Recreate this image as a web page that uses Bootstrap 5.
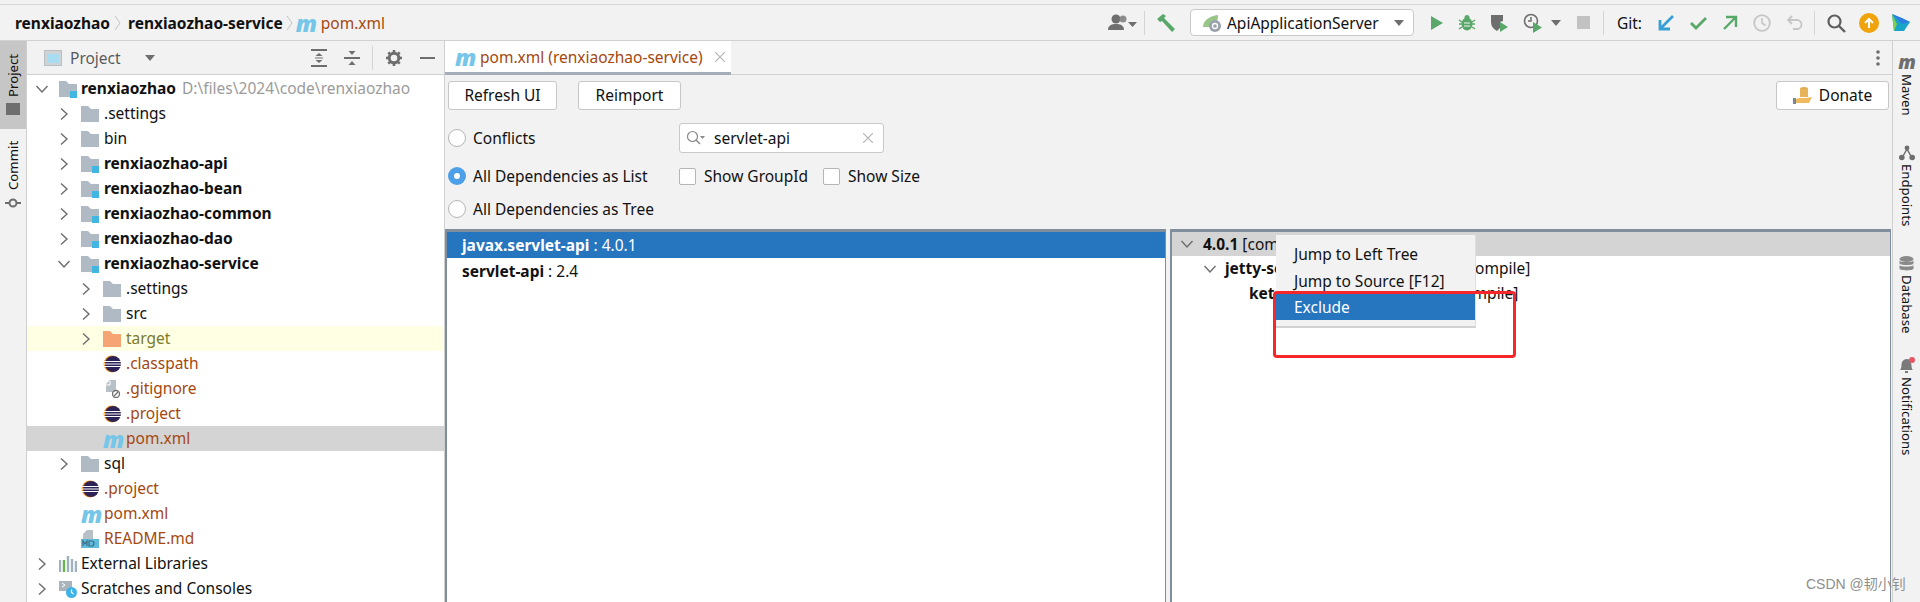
<!DOCTYPE html>
<html lang="en"><head><meta charset="utf-8"><title>pom.xml</title>
<link rel="stylesheet" href="https://cdn.jsdelivr.net/npm/bootstrap@5.3.0/dist/css/bootstrap.min.css">
<style>
html,body{height:602px;overflow:hidden}
body{background:#f2f2f2;font:15.5px/20px "Noto Sans","Noto Sans CJK SC",sans-serif;color:#111;position:relative}
.top-bar{height:37px;margin-top:4px;border-top:1px solid #d6d6d6;border-bottom:1px solid #d1d1d1;padding-left:15px;flex:none}
.crumb-sep{width:7px;height:16px;margin:0 7px 0 4px;flex:none}
.crumb-sep.tight{margin:0 3px 0 3px}
.mvn{font:italic 800 23px/18px "Open Sans",sans-serif;color:#75c6e8;width:18px;display:inline-block;letter-spacing:-1px;flex:none}
.crumb-file{margin-left:7px}
.file-red{color:#a4480f}
.tools{margin-left:auto;padding-right:10px}
.tools svg{flex:none}
.mg-7{margin-left:7px}.mg-8{margin-left:8px}.mg-10{margin-left:10px}.mg-11{margin-left:11px}.mg-12{margin-left:12px}.mg-13{margin-left:13px}.mg-14{margin-left:14px}.mg-15{margin-left:15px}.mg-16{margin-left:16px}.mg-17{margin-left:17px}.mg-18{margin-left:18px}
.vsep{width:1px;height:24px;background:#d4d4d4;flex:none}
.run-box{width:224px;height:27px;background:#fff;border:1px solid #c9c9c9;border-radius:4px;padding:0 9px 0 11px;gap:5px}
.run-box .caret-mark{margin-left:auto}
.main-area{height:561px}
.side-left{width:27px;border-right:1px solid #cfcfcf;flex:none}
.side-right{width:28px;border-left:1px solid #cfcfcf;flex:none;padding-top:3px}
.side-tab{writing-mode:vertical-rl;font-size:13.2px;line-height:18px;gap:5px;display:flex;align-items:center;width:26px}
.side-right .side-tab{gap:3px}
.side-left .side-tab{transform:rotate(180deg)}
.proj-on{background:#c6c6c6;height:88px;justify-content:center}
.commit-tab{height:72px;margin-top:10px;justify-content:flex-start}
.mvn-side{color:#6e6e6e;font-size:19px;writing-mode:horizontal-tb;text-align:center}
.mt-a{margin-top:9px}.mt-b{margin-top:29px}.mt-c{margin-top:30px}.mt-d{margin-top:24px}
.proj-panel{width:418px;flex:none;background:#fff;border-right:1px solid #cfcfcf}
.proj-head{height:34px;background:#f2f2f2;border-bottom:1px solid #d1d1d1;padding-left:17px;padding-right:9px}
.tree-body{padding-top:1px}
.row-line{height:25px;white-space:nowrap;display:flex;align-items:center;padding-left:8px;line-height:25px}
.row-line.l1{padding-left:30px}
.row-line.l2{padding-left:52px}
.row-line.hl-y{background:#ffffe4}
.row-line.hl-g{background:#d4d4d4}
.arrow-box{width:14px;height:14px;margin-right:10px;flex:none}
.ico{width:18px;height:18px;margin-right:4px;flex:none}
.l1 .ico,.l2 .ico{margin-right:5px}
.no-arrow{margin-left:24px}
.mvn-gap{margin-right:5px}
.strong-t{font-weight:700}
.path-t{color:#9b9b9b;margin-left:6px}
.olive{color:#7d7a2a}
.editor{min-width:0}
.tab-strip{height:34px;border-bottom:1px solid #d1d1d1;padding-right:12px}
.tab-on{width:286px;height:34px;background:#fff;border-bottom:3px solid #a5adb8;padding-left:10px;gap:3px}
.pom-tab-close{margin-left:9px}
.tool-row{padding:6px 3px 0 3px;height:39px}
.ij-btn{background:#fff;border:1px solid #c7c7c7;border-radius:3px;height:29px;padding:0;line-height:27px;color:#111;text-align:center}
.btn-w1{width:109px}.btn-w2{width:103px;margin-left:21px}.btn-w3{width:113px;gap:6px}
.opt-area{height:115px;padding-top:9px}
.opt-col{width:234px;padding-left:3px;flex:none}
.opt-row{height:30px;gap:7px}
.opt-row.second{margin-top:8px}
.opt-row.third{margin-top:3px}
.radio-o{width:18px;height:18px;border-radius:50%;border:1px solid #b5b5b5;background:#fff;flex:none}
.radio-on{background:#4d9fe8;border:none;position:relative}
.radio-on::after{content:"";position:absolute;left:6px;top:6px;width:6px;height:6px;background:#fff;border-radius:50%}
.search-bx{width:205px;height:30px;background:#fff;border:1px solid #c9c9c9;border-radius:3px;padding:0 10px 0 6px}
.chk-b{width:17px;height:17px;border:1px solid #b5b5b5;border-radius:2px;background:#fff;flex:none;margin-right:1px}
.grp-lab{width:112px}
.dep-panes{gap:4px;padding-right:1px;height:373px}
.dep-pane{background:#fff;border-top:3px solid #7f8d9d;border-left:2px solid #7f8d9d;border-right:1px solid #7f8d9d;min-width:0}
.left-pane{width:721px;flex:none}
.dep-row{height:26px;padding-left:15px;line-height:26px;white-space:nowrap}
.dep-row.sel{background:#2675bf;color:#fff}
.dep-row.two{height:27px;line-height:27px}
.r-row{height:25px;line-height:25px;white-space:nowrap;display:flex;align-items:center}
.r-row.head{background:#d4d4d4;height:24px}
.lvl-a{padding-left:8px}.lvl-b{padding-left:31px}.lvl-c{padding-left:77px}
.arrow-a{margin-right:9px}.arrow-b{margin-right:8px}
.float-menu{position:absolute;left:1276px;top:235px;width:200px;height:93px;background:#f2f2f2;border-bottom:2px solid #d2d2d2;border-right:1px solid #dedede;padding-top:6px;z-index:2}
.menu-row{height:26px;line-height:26px;padding-left:18px}
.menu-row.two{margin-top:1px}
.menu-row.act{background:#2675bf;color:#fff}
.red-frame{position:absolute;left:1273px;top:291px;width:243px;height:67px;border:3px solid #f6262a;border-radius:4px;z-index:3;pointer-events:none}
.wm{position:absolute;left:1806px;top:575px;color:#8e8e8e;font:14px/18px "Liberation Sans","Noto Sans CJK SC",sans-serif;z-index:4;white-space:nowrap}
</style></head>
<body>
<svg width="0" height="0" class="position-absolute">
<defs>
<symbol id="fold" viewBox="0 0 18 18"><path d="M0 1h7l3 3h8v13H0z" fill="#afbac4"/></symbol>
<symbol id="fold-o" viewBox="0 0 18 18"><path d="M0 1h7l3 3h8v13H0z" fill="#f7a474"/></symbol>
<symbol id="modf" viewBox="0 0 18 18"><path d="M0 1h7l3 3h8v9h-5v4H0z" fill="#afbac4"/><rect x="11" y="11" width="7" height="7" fill="#40b6e0"/></symbol>
<symbol id="ecl" viewBox="0 0 18 18"><circle cx="9" cy="9" r="8.4" fill="#f7941e"/><circle cx="10" cy="9" r="8" fill="#2c2255"/><path d="M1 6.500h17M1 9h17M1 11.500h17" stroke="#fff" stroke-width="1"/></symbol>
<symbol id="chev-r" viewBox="0 0 14 14"><path d="M4 1.500 10 7l-6 5.500" fill="none" stroke="#6e6e6e" stroke-width="1.400"/></symbol>
<symbol id="chev-d" viewBox="0 0 14 14"><path d="M1.500 4 7 10l5.500-6" fill="none" stroke="#6e6e6e" stroke-width="1.400"/></symbol>
<symbol id="tri" viewBox="0 0 10 6"><path d="M0 0h10L5 6z" fill="#6e6e6e"/></symbol>
</defs></svg>

<div class="top-bar d-flex align-items-center">
<span class="strong-t">renxiaozhao</span>
<svg class="crumb-sep" viewBox="0 0 7 16"><path d="M1 1l5 7-5 7" fill="none" stroke="#c4c4c4"/></svg>
<span class="strong-t">renxiaozhao-service</span>
<svg class="crumb-sep tight" viewBox="0 0 7 16"><path d="M1 1l5 7-5 7" fill="none" stroke="#c4c4c4"/></svg>
<span class="mvn">m</span><span class="file-red crumb-file">pom.xml</span>
<div class="tools d-flex align-items-center">
<svg width="30" height="20" viewBox="0 0 30 20"><circle cx="9" cy="6" r="4.500" fill="#6e6e6e"/><path d="M1 17c0-5 4-6 8-6s8 1 8 6z" fill="#6e6e6e"/><circle cx="16" cy="6" r="3.500" fill="#8c8c8c"/><path d="M21 9h9l-4.500 5z" fill="#6e6e6e"/></svg>
<span class="vsep mg-7"></span>
<svg class="mg-11" width="20" height="20" viewBox="0 0 20 20"><path d="M1 6 7 1l3 2-2 2 11 11-3 3L6 8 4 9z" fill="#59a869"/></svg>
<div class="run-box d-flex align-items-center mg-14">
<svg width="20" height="20" viewBox="0 0 20 20"><path d="M1 14C1 7 8 3 16 2c0 7-3 12-8 12z" fill="#97c688"/><circle cx="13" cy="13" r="6" fill="#9aa3ab"/><circle cx="13" cy="13" r="2.500" fill="none" stroke="#fff" stroke-width="1.300"/></svg>
<span>ApiApplicationServer</span>
<svg class="caret-mark" width="10" height="6"><use href="#tri"/></svg>
</div>
<svg class="mg-15" width="16" height="18" viewBox="0 0 16 18"><path d="M2 2l12 7-12 7z" fill="#59a869"/></svg>
<svg class="mg-13" width="18" height="18" viewBox="0 0 18 18"><ellipse cx="9" cy="10" rx="5.500" ry="6.500" fill="#59a869"/><circle cx="9" cy="3.500" r="2.500" fill="#59a869"/><path d="M1 6l3 2M17 6l-3 2M1 10h3M17 10h-3M1 15l3-2M17 15l-3-2" stroke="#59a869" stroke-width="1.500"/><path d="M6 9h6M6 12h6" stroke="#f2f2f2"/></svg>
<svg class="mg-13" width="20" height="20" viewBox="0 0 20 20"><path d="M2 2h12v6l-3 1v6l-3 3c-4-2-6-5-6-9z" fill="#6e6e6e"/><path d="M11 9l8 5-8 5z" fill="#59a869"/></svg>
<svg class="mg-14" width="20" height="20" viewBox="0 0 20 20"><circle cx="8" cy="8" r="6.500" fill="none" stroke="#6e6e6e" stroke-width="1.600"/><path d="M8 4v4H5" fill="none" stroke="#6e6e6e" stroke-width="1.500"/><path d="M10 9l9 5.500-9 5.500z" fill="#59a869"/></svg>
<svg class="mg-8" width="10" height="6"><use href="#tri"/></svg>
<svg class="mg-16" width="13" height="13" viewBox="0 0 13 13"><rect width="13" height="13" fill="#c2c2c2"/></svg>
<span class="vsep mg-13"></span>
<span class="mg-13">Git:</span>
<svg class="mg-15" width="18" height="18" viewBox="0 0 18 18"><path d="M16 2 4 14M3 6v9h10" fill="none" stroke="#389fd6" stroke-width="2.800"/></svg>
<svg class="mg-15" width="18" height="18" viewBox="0 0 18 18"><path d="M1 9l5 5L16 4" fill="none" stroke="#59a869" stroke-width="2.800"/></svg>
<svg class="mg-14" width="16" height="16" viewBox="0 0 16 16"><path d="M2 14 13 3M4 2h10v10" fill="none" stroke="#59a869" stroke-width="2.400"/></svg>
<svg class="mg-14" width="20" height="20" viewBox="0 0 20 20"><circle cx="10" cy="10" r="7.800" fill="none" stroke="#c6c6c6" stroke-width="1.800"/><path d="M10 5v5l3.500 2.500" fill="none" stroke="#c6c6c6" stroke-width="1.600"/></svg>
<svg class="mg-14" width="18" height="18" viewBox="0 0 18 18"><path d="M6 2 2 6l4 4M2 6h9a4.500 4.500 0 0 1 0 9H7" fill="none" stroke="#c6c6c6" stroke-width="1.800"/></svg>
<span class="vsep mg-10"></span>
<svg class="mg-11" width="20" height="20" viewBox="0 0 20 20"><circle cx="8.500" cy="8.500" r="6" fill="none" stroke="#5e5e5e" stroke-width="2.200"/><path d="M13 13l6 6" stroke="#5e5e5e" stroke-width="2.400"/></svg>
<svg class="mg-13" width="20" height="20" viewBox="0 0 20 20"><circle cx="10" cy="10" r="10" fill="#f0a30a"/><path d="M10 15V7M6 10l4-4 4 4" fill="none" stroke="#fff" stroke-width="2"/></svg>
<svg class="mg-13" width="18" height="20" viewBox="0 0 18 20"><path d="M0 1l18 8-6 9H2z" fill="#1aa5c8"/><path d="M0 1l10 4 8 4-8 2z" fill="#2f7de1"/><path d="M0 1l5 10-3 7z" fill="#7ccf4f"/></svg>
</div>
</div>

<div class="main-area d-flex">
<div class="side-left d-flex flex-column">
<div class="side-tab proj-on"><svg width="14" height="14" viewBox="0 0 14 14"><path d="M0 1h14v12H5V3H0zM0 3h5v10H0z" fill="#6e6e6e"/></svg><span>Project</span></div>
<div class="side-tab commit-tab"><svg width="16" height="16" viewBox="0 0 16 16"><circle cx="8" cy="8" r="3.500" fill="none" stroke="#6e6e6e" stroke-width="2"/><path d="M0 8h4M12 8h4" stroke="#6e6e6e" stroke-width="2"/></svg><span>Commit</span></div>
</div>

<div class="proj-panel d-flex flex-column">
<div class="proj-head d-flex align-items-center">
<svg width="18" height="18" viewBox="0 0 18 18"><rect x=".5" y="1.500" width="17" height="15" fill="#cfd3d6" stroke="#b9bec2"/><rect x="3" y="5" width="12" height="9" fill="#a8dcf2"/></svg>
<span class="ms-2 text-body-secondary">Project</span>
<svg width="10" height="6" class="ms-4"><use href="#tri"/></svg>
<div class="d-flex align-items-center ms-auto">
<svg width="16" height="18" viewBox="0 0 16 18"><path d="M0 1h16M0 17h16" stroke="#6e6e6e" stroke-width="2"/><path d="M8 4l3.500 3h-7zM8 14l3.500-3h-7z" fill="#6e6e6e"/><path d="M4 9h8" stroke="#6e6e6e"/></svg>
<svg class="mg-17" width="16" height="18" viewBox="0 0 16 18"><path d="M0 9h16" stroke="#6e6e6e" stroke-width="2"/><path d="M8 6 4.500 2h7zM8 12l3.500 4h-7z" fill="#6e6e6e"/></svg>
<span class="vsep mg-12"></span>
<svg class="mg-13" width="16" height="16" viewBox="0 0 16 16"><circle cx="8" cy="8" r="4.800" fill="none" stroke="#6e6e6e" stroke-width="3"/><path d="M8 0v3M8 13v3M0 8h3M13 8h3M2.300 2.300l2 2M11.700 11.700l2 2M2.300 13.700l2-2M11.700 4.300l2-2" stroke="#6e6e6e" stroke-width="2.600"/></svg>
<svg class="mg-18" width="15" height="4" viewBox="0 0 15 4"><rect width="15" height="2" y="1" fill="#6e6e6e"/></svg>
</div>
</div>
<div class="tree-body">
<div class="row-line"><svg class="arrow-box"><use href="#chev-d"/></svg><svg class="ico"><use href="#modf"/></svg><span class="strong-t">renxiaozhao</span><span class="path-t">D:\files\2024\code\renxiaozhao</span></div>
<div class="row-line l1"><svg class="arrow-box"><use href="#chev-r"/></svg><svg class="ico"><use href="#fold"/></svg><span>.settings</span></div>
<div class="row-line l1"><svg class="arrow-box"><use href="#chev-r"/></svg><svg class="ico"><use href="#fold"/></svg><span>bin</span></div>
<div class="row-line l1"><svg class="arrow-box"><use href="#chev-r"/></svg><svg class="ico"><use href="#modf"/></svg><span class="strong-t">renxiaozhao-api</span></div>
<div class="row-line l1"><svg class="arrow-box"><use href="#chev-r"/></svg><svg class="ico"><use href="#modf"/></svg><span class="strong-t">renxiaozhao-bean</span></div>
<div class="row-line l1"><svg class="arrow-box"><use href="#chev-r"/></svg><svg class="ico"><use href="#modf"/></svg><span class="strong-t">renxiaozhao-common</span></div>
<div class="row-line l1"><svg class="arrow-box"><use href="#chev-r"/></svg><svg class="ico"><use href="#modf"/></svg><span class="strong-t">renxiaozhao-dao</span></div>
<div class="row-line l1"><svg class="arrow-box"><use href="#chev-d"/></svg><svg class="ico"><use href="#modf"/></svg><span class="strong-t">renxiaozhao-service</span></div>
<div class="row-line l2"><svg class="arrow-box"><use href="#chev-r"/></svg><svg class="ico"><use href="#fold"/></svg><span>.settings</span></div>
<div class="row-line l2"><svg class="arrow-box"><use href="#chev-r"/></svg><svg class="ico"><use href="#fold"/></svg><span>src</span></div>
<div class="row-line l2 hl-y"><svg class="arrow-box"><use href="#chev-r"/></svg><svg class="ico"><use href="#fold-o"/></svg><span class="olive">target</span></div>
<div class="row-line l2"><svg class="ico no-arrow"><use href="#ecl"/></svg><span class="file-red">.classpath</span></div>
<div class="row-line l2"><svg class="ico no-arrow" viewBox="0 0 18 18"><path d="M3 4 7 0h6v12H3z" fill="#b8c0c7"/><path d="M7 1v4H3" fill="none" stroke="#fff"/><circle cx="13" cy="14" r="3.500" fill="#fff" stroke="#6e6e6e" stroke-width="1.300"/><path d="M11 16l4-4" stroke="#6e6e6e" stroke-width="1.200"/></svg><span class="file-red">.gitignore</span></div>
<div class="row-line l2"><svg class="ico no-arrow"><use href="#ecl"/></svg><span class="file-red">.project</span></div>
<div class="row-line l2 hl-g"><span class="mvn no-arrow mvn-gap">m</span><span class="file-red">pom.xml</span></div>
<div class="row-line l1"><svg class="arrow-box"><use href="#chev-r"/></svg><svg class="ico"><use href="#fold"/></svg><span>sql</span></div>
<div class="row-line l1"><svg class="ico no-arrow"><use href="#ecl"/></svg><span class="file-red">.project</span></div>
<div class="row-line l1"><span class="mvn no-arrow mvn-gap">m</span><span class="file-red">pom.xml</span></div>
<div class="row-line l1"><svg class="ico no-arrow" viewBox="0 0 18 18"><path d="M6 0h6v9H2V4z" fill="#b8c0c7"/><rect y="9" width="18" height="9" fill="#5fbbdc"/><path d="M2 16v-5l2 3 2-3v5M8 11v5h2.500a2.500 2.500 0 0 0 0-5z" fill="none" stroke="#3a6d84" stroke-width="1.200"/></svg><span class="file-red">README.md</span></div>
<div class="row-line"><svg class="arrow-box"><use href="#chev-r"/></svg><svg class="ico" viewBox="0 0 18 18"><path d="M1 5v12M9 1v16M13 4v13M17 6v11" stroke="#9fb2bd" stroke-width="2.400"/><path d="M5 5v12" stroke="#6ab04c" stroke-width="2.400"/></svg><span>External Libraries</span></div>
<div class="row-line"><svg class="arrow-box"><use href="#chev-r"/></svg><svg class="ico" viewBox="0 0 18 18"><path d="M0 1h13v10H0z" fill="#a9b4bc"/><path d="M3 3l3 2-3 2" stroke="#fff" fill="none"/><circle cx="12.500" cy="12.500" r="5.500" fill="#3db4e7"/><path d="M12.500 9.500v3l2 1.500" stroke="#fff" fill="none" stroke-width="1.200"/></svg><span>Scratches and Consoles</span></div>
</div>
</div>

<div class="editor flex-grow-1 d-flex flex-column">
<div class="tab-strip d-flex align-items-start justify-content-between">
<div class="tab-on d-flex align-items-center"><span class="mvn">m</span><span class="file-red ms-1">pom.xml (renxiaozhao-service)</span><svg class="pom-tab-close" width="10" height="10" viewBox="0 0 10 10"><path d="M0 0l10 10M10 0 0 10" stroke="#b4b4b4" stroke-width="1.200"/></svg></div>
<svg class="align-self-center" width="4" height="16" viewBox="0 0 4 16"><circle cx="2" cy="2" r="1.800" fill="#6e6e6e"/><circle cx="2" cy="8" r="1.800" fill="#6e6e6e"/><circle cx="2" cy="14" r="1.800" fill="#6e6e6e"/></svg>
</div>
<div class="tool-row d-flex">
<button class="ij-btn btn-w1" type="button">Refresh UI</button>
<button class="ij-btn btn-w2" type="button">Reimport</button>
<button class="ij-btn btn-w3 ms-auto d-flex align-items-center justify-content-center" type="button"><svg width="20" height="20" viewBox="0 0 20 20"><ellipse cx="11" cy="3" rx="4" ry="2" fill="#e3a94e"/><rect x="7" y="3" width="8" height="8" fill="#e8b45a"/><path d="M0 13h3l3-1h7l6-1-3 6H3l-3-1z" fill="#f0bb5e"/><rect y="12" width="3" height="6" fill="#7a8794"/></svg>Donate</button>
</div>
<div class="opt-area d-flex">
<div class="opt-col">
<div class="opt-row d-flex align-items-center"><span class="radio-o"></span><span>Conflicts</span></div>
<div class="opt-row second d-flex align-items-center"><span class="radio-o radio-on"></span><span>All Dependencies as List</span></div>
<div class="opt-row third d-flex align-items-center"><span class="radio-o"></span><span>All Dependencies as Tree</span></div>
</div>
<div>
<div class="opt-row d-flex align-items-center"><div class="search-bx d-flex align-items-center"><svg width="20" height="16" viewBox="0 0 20 16"><circle cx="6.500" cy="6.500" r="5" fill="none" stroke="#8a8a8a" stroke-width="1.200"/><path d="M10 10l4 4" stroke="#8a8a8a" stroke-width="1.400"/><path d="M14 6h5l-2.500 3z" fill="#8a8a8a"/></svg><span class="ms-2">servlet-api</span><svg class="ms-auto" width="10" height="10" viewBox="0 0 10 10"><path d="M0 0l10 10M10 0 0 10" stroke="#b4b4b4" stroke-width="1.200"/></svg></div></div>
<div class="opt-row second d-flex align-items-center"><span class="chk-b"></span><span class="grp-lab">Show GroupId</span><span class="chk-b"></span><span>Show Size</span></div>
</div>
</div>
<div class="dep-panes d-flex">
<div class="dep-pane left-pane">
<div class="dep-row sel"><span class="strong-t">javax.servlet-api</span> : 4.0.1</div>
<div class="dep-row two"><span class="strong-t">servlet-api</span> : 2.4</div>
</div>
<div class="dep-pane flex-grow-1">
<div class="r-row head lvl-a"><svg class="arrow-box arrow-a"><use href="#chev-d"/></svg><span class="strong-t">4.0.1</span>&nbsp;[compile]</div>
<div class="r-row lvl-b"><svg class="arrow-box arrow-b"><use href="#chev-d"/></svg><span class="strong-t">jetty-servlet</span>&nbsp;: 9.4.31.v20200723 [compile]</div>
<div class="r-row lvl-c"><span class="strong-t">ketcher-core</span>&nbsp;: 1.0.0.Final-a [compile]</div>
</div>
</div>
</div>

<div class="side-right d-flex flex-column align-items-center">
<div class="side-tab mt-a"><span class="mvn mvn-side">m</span><span>Maven</span></div>
<div class="side-tab mt-b"><svg width="16" height="16" viewBox="0 0 16 16"><path d="M3 13 8 4l5 9" fill="none" stroke="#6e6e6e" stroke-width="1.500"/><circle cx="8" cy="3" r="2.400" fill="#6e6e6e"/><circle cx="2.800" cy="12.500" r="2.800" fill="#6e6e6e"/><circle cx="13.200" cy="12.500" r="2.800" fill="#6e6e6e"/></svg><span>Endpoints</span></div>
<div class="side-tab mt-c"><svg width="15" height="16" viewBox="0 0 15 16"><ellipse cx="7.500" cy="3" rx="7" ry="3" fill="#8a8a8a"/><path d="M.5 4.500v3c0 2 14 2 14 0v-3c0 2-14 2-14 0zM.5 9v3.500c0 2.500 14 2.500 14 0V9c0 2-14 2-14 0z" fill="#8a8a8a"/></svg><span>Database</span></div>
<div class="side-tab mt-d"><svg width="16" height="17" viewBox="0 0 16 17"><path d="M1 13c2-2 1-5 2-8 1-2 3-3 5-3s4 1 4 4c1 3 0 5 2 7z" fill="#7a7a7a"/><rect x="6" y="14" width="3" height="2" fill="#7a7a7a"/><circle cx="13" cy="3" r="3" fill="#e55765"/></svg><span>Notifications</span></div>
</div>
</div>

<div class="float-menu">
<div class="menu-row">Jump to Left Tree</div>
<div class="menu-row two">Jump to Source [F12]</div>
<div class="menu-row act">Exclude</div>
</div>
<div class="red-frame"></div>
<div class="wm">CSDN @韧小钊</div>
</body></html>
